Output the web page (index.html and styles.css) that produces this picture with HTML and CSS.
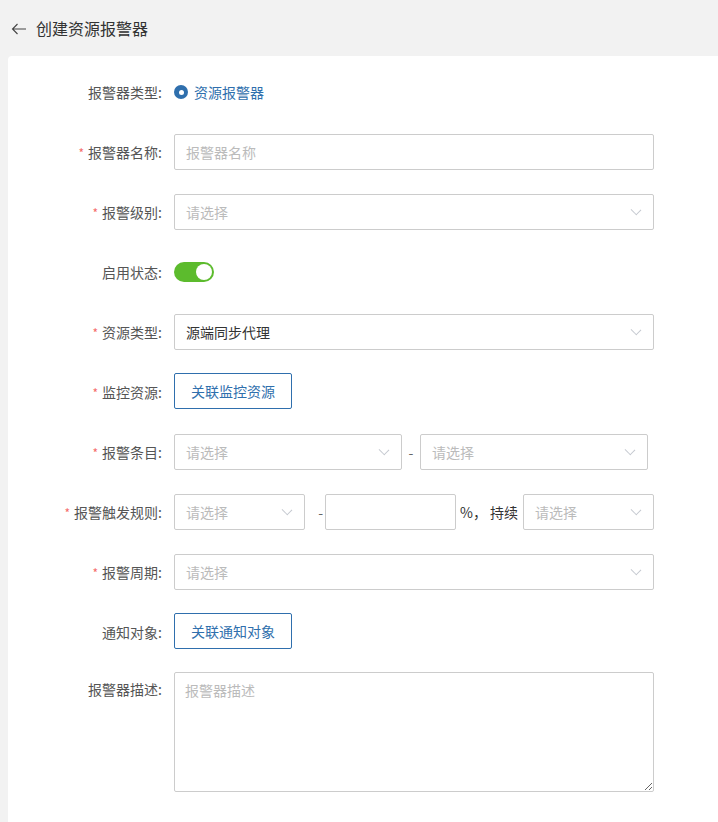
FILE: index.html
```html
<!DOCTYPE html>
<html lang="zh-CN">
<head>
  <meta charset="UTF-8">
  <meta name="viewport" content="width=device-width, initial-scale=1.0">
  <title>创建资源报警器</title>
  <link rel="stylesheet" href="styles.css">
</head>
<body>
  <div class="page-header">
    <svg class="back-icon" width="16" height="12" viewBox="0 0 16 12">
      <path d="M15 6H1.5M6.5 1L1.5 6l5 5" fill="none" stroke="#444" stroke-width="1.1"/>
    </svg>
    <span class="page-title">创建资源报警器</span>
  </div>

  <div class="card">
    <div class="form-item">
      <label class="form-label">报警器类型:</label>
      <div class="form-control">
        <span class="radio"><span class="radio-dot"></span></span>
        <span class="radio-text">资源报警器</span>
      </div>
    </div>

    <div class="form-item">
      <label class="form-label required">报警器名称:</label>
      <div class="form-control">
        <input type="text" class="input" placeholder="报警器名称">
      </div>
    </div>

    <div class="form-item">
      <label class="form-label required">报警级别:</label>
      <div class="form-control">
        <div class="select"><span class="placeholder">请选择</span><i class="arrow"></i></div>
      </div>
    </div>

    <div class="form-item">
      <label class="form-label">启用状态:</label>
      <div class="form-control">
        <span class="switch"><span class="switch-knob"></span></span>
      </div>
    </div>

    <div class="form-item">
      <label class="form-label required">资源类型:</label>
      <div class="form-control">
        <div class="select"><span class="value">源端同步代理</span><i class="arrow"></i></div>
      </div>
    </div>

    <div class="form-item">
      <label class="form-label required">监控资源:</label>
      <div class="form-control">
        <button class="btn-outline">关联监控资源</button>
      </div>
    </div>

    <div class="form-item">
      <label class="form-label required">报警条目:</label>
      <div class="form-control items-row">
        <div class="select half"><span class="placeholder">请选择</span><i class="arrow"></i></div>
        <span class="dash">-</span>
        <div class="select half"><span class="placeholder">请选择</span><i class="arrow"></i></div>
      </div>
    </div>

    <div class="form-item">
      <label class="form-label required">报警触发规则:</label>
      <div class="form-control rule-row">
        <div class="select third"><span class="placeholder">请选择</span><i class="arrow"></i></div>
        <span class="dash rule-dash">-</span>
        <input type="text" class="input third">
        <span class="rule-text">%，&nbsp;持续</span>
        <div class="select third"><span class="placeholder">请选择</span><i class="arrow"></i></div>
      </div>
    </div>

    <div class="form-item">
      <label class="form-label required">报警周期:</label>
      <div class="form-control">
        <div class="select"><span class="placeholder">请选择</span><i class="arrow"></i></div>
      </div>
    </div>

    <div class="form-item">
      <label class="form-label">通知对象:</label>
      <div class="form-control">
        <button class="btn-outline">关联通知对象</button>
      </div>
    </div>

    <div class="form-item textarea-item">
      <label class="form-label">报警器描述:</label>
      <div class="form-control">
        <textarea class="textarea" placeholder="报警器描述"></textarea>
      </div>
    </div>
  </div>
</body>
</html>
```

FILE: styles.css
```css
* {
  margin: 0;
  padding: 0;
  box-sizing: border-box;
}

body {
  font-family: "Noto Sans CJK SC", "Noto Sans", sans-serif;
  background-color: #f2f2f2;
  font-size: 14px;
  color: #333;
  height: 822px;
  overflow: hidden;
}

.page-header {
  height: 56px;
  display: flex;
  align-items: center;
  padding-left: 11px;
}

.back-icon {
  margin-right: 9px;
  margin-top: 1px;
}

.page-title {
  font-size: 16px;
  color: #333;
}

.card {
  margin-left: 8px;
  background-color: #fff;
  border-radius: 4px 0 0 0;
  padding-top: 18px;
  height: 766px;
}

.form-item {
  display: flex;
  align-items: center;
  height: 36px;
  margin-bottom: 24px;
}

.form-label {
  width: 166px;
  padding-right: 12px;
  text-align: right;
  color: #555;
  font-size: 14px;
  flex-shrink: 0;
}

.form-label.required::before {
  content: "*";
  color: #f56c6c;
  margin-right: 4px;
  font-size: 12px;
}

.form-control {
  width: 480px;
  display: flex;
  align-items: center;
}

.radio {
  width: 14px;
  height: 14px;
  border-radius: 50%;
  background-color: #2f6fad;
  display: flex;
  align-items: center;
  justify-content: center;
  margin-right: 6px;
}

.radio-dot {
  width: 5px;
  height: 5px;
  border-radius: 50%;
  background-color: #fff;
}

.radio-text {
  color: #2f6fad;
}

.input,
.select,
.textarea {
  font-family: "Noto Sans CJK SC", "Noto Sans", sans-serif;
  font-size: 14px;
  border: 1px solid #ccc;
  border-radius: 2px;
  background-color: #fff;
  color: #333;
}

.input {
  width: 100%;
  height: 36px;
  padding: 0 11px;
  outline: none;
}

.input::placeholder,
.textarea::placeholder,
.placeholder {
  color: #bbb;
}

.select {
  width: 100%;
  height: 36px;
  padding: 0 11px;
  display: flex;
  align-items: center;
  justify-content: space-between;
}

.arrow {
  width: 8px;
  height: 8px;
  border-right: 1px solid #c4c8cf;
  border-bottom: 1px solid #c4c8cf;
  transform: rotate(45deg) scaleY(0.9);
  margin-top: -5px;
  margin-right: 2px;
}

.switch {
  width: 40px;
  height: 20px;
  border-radius: 10px;
  background-color: #5cbb2d;
  display: flex;
  align-items: center;
  justify-content: flex-end;
  padding-right: 2px;
}

.switch-knob {
  width: 16px;
  height: 16px;
  border-radius: 50%;
  background-color: #fff;
}

.btn-outline {
  font-family: "Noto Sans CJK SC", "Noto Sans", sans-serif;
  height: 36px;
  width: 118px;
  margin-top: -2px;
  font-size: 14px;
  color: #2f6fad;
  background-color: #fff;
  border: 1px solid #2f6fad;
  border-radius: 2px;
}

.items-row .half {
  width: 228px;
}

.dash {
  width: 18px;
  text-align: center;
  color: #666;
}

.rule-row .third {
  width: 131px;
  flex-shrink: 0;
}

.rule-dash {
  width: 20px;
  text-align: right;
  padding-right: 2px;
}

.rule-text {
  width: 67px;
  padding-left: 4px;
  color: #333;
}

.textarea-item {
  height: 120px;
  margin-top: -2px;
  align-items: flex-start;
}

.textarea-item .form-label {
  padding-top: 7px;
}

.textarea {
  width: 480px;
  height: 120px;
  padding: 7px 10px;
  resize: vertical;
  outline: none;
}
```
